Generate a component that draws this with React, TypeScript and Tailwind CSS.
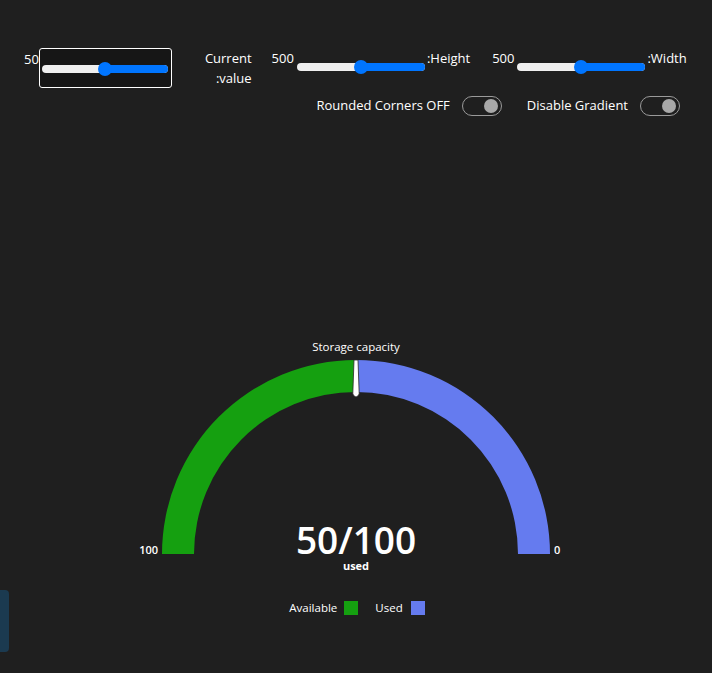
import React from "react";

const font = { fontFamily: '"Open Sans", "Noto Sans", sans-serif' };

function Slider({ pct, width }: { pct: number; width: string }) {
  // rtl slider: blue fill grows from the right edge
  return (
    <div className={`relative h-[14px] ${width} flex items-center`}>
      <div className="h-[8px] w-full rounded-full bg-[#efefef] overflow-hidden flex justify-end">
        <div className="h-full bg-[#0075ff]" style={{ width: `${100 - pct}%` }} />
      </div>
      <div
        className="absolute top-0 h-[14px] w-[14px] -ml-[7px] rounded-full bg-[#0075ff]"
        style={{ left: `${pct}%` }}
      />
    </div>
  );
}

function Toggle() {
  return (
    <div className="w-[40px] h-[20px] rounded-full border border-[#9a9a9a] flex items-center justify-end pr-[3px]">
      <div className="w-[14px] h-[14px] rounded-full bg-[#a8a8a8]" />
    </div>
  );
}

export default function App() {
  return (
    <div className="relative w-[712px] h-[673px] bg-[#1f1f1f] text-white overflow-hidden" style={font}>
      <div className="pt-[48px] pl-[24px] flex items-start text-[13px] leading-[20px]">
        <span className="mt-[1px]">50</span>
        <div className="w-[133px] h-[40px] rounded-[3px] border border-white bg-[#161616] flex items-center justify-center pt-[1px]">
          <Slider pct={50} width="w-[126px]" />
        </div>
        <div className="ml-[33px] text-right leading-[20px]">
          <div>Current</div>
          <div>:value</div>
        </div>
        <span className="ml-[20px]">500</span>
        <div className="ml-[3px] mt-[12px]">
          <Slider pct={50} width="w-[128px]" />
        </div>
        <span className="ml-[2px]">:Height</span>
        <span className="ml-[22px]">500</span>
        <div className="ml-[3px] mt-[12px]">
          <Slider pct={50} width="w-[128px]" />
        </div>
        <span className="ml-[2px]">:Width</span>
      </div>

      <div className="mt-[8px] pr-[32px] flex items-center justify-end text-[13px]">
        <span>Rounded Corners OFF</span>
        <div className="ml-[12px]">
          <Toggle />
        </div>
        <span className="ml-[25px]">Disable Gradient</span>
        <div className="ml-[12px]">
          <Toggle />
        </div>
      </div>

      <div className="mt-[218px] flex flex-col items-center">
        <svg width="440" height="242" viewBox="0 0 440 242">
          <text x="220" y="17" textAnchor="middle" fill="#fff" fontSize="11.5" style={font}>
            Storage capacity
          </text>
          <path d="M 26 220 A 194 194 0 0 1 220 26 L 220 58 A 162 162 0 0 0 58 220 Z" fill="#15a010" />
          <path d="M 220 26 A 194 194 0 0 1 414 220 L 382 220 A 162 162 0 0 0 220 58 Z" fill="#657bef" />
          <path
            d="M 218 26 L 222 26 L 223.2 60 Q 220 66 216.8 60 Z"
            fill="#fff"
            stroke="#2a2a2a"
            strokeWidth="0.8"
          />
          <text x="22" y="220" textAnchor="end" fill="#fff" fontSize="11" fontWeight="600" style={font}>
            100
          </text>
          <text x="418" y="220" fill="#fff" fontSize="11" fontWeight="600" style={font}>
            0
          </text>
          <text x="220" y="220" textAnchor="middle" fill="#fff" fontSize="37" fontWeight="600" style={font}>
            50/100
          </text>
          <text x="220" y="236" textAnchor="middle" fill="#fff" fontSize="11" fontWeight="700" style={font}>
            used
          </text>
        </svg>
        <div className="mt-[24px] ml-[2px] flex items-center text-[11.5px] leading-[16px]">
          <span>Available</span>
          <span className="ml-[7px] w-[14px] h-[14px] bg-[#15a010]" />
          <span className="ml-[17px]">Used</span>
          <span className="ml-[8px] w-[14px] h-[14px] bg-[#657bef]" />
        </div>
      </div>

      <div className="absolute left-0 top-[590px] w-[9px] h-[62px] rounded-r-[4px] bg-[#1b3a50]" />
    </div>
  );
}
